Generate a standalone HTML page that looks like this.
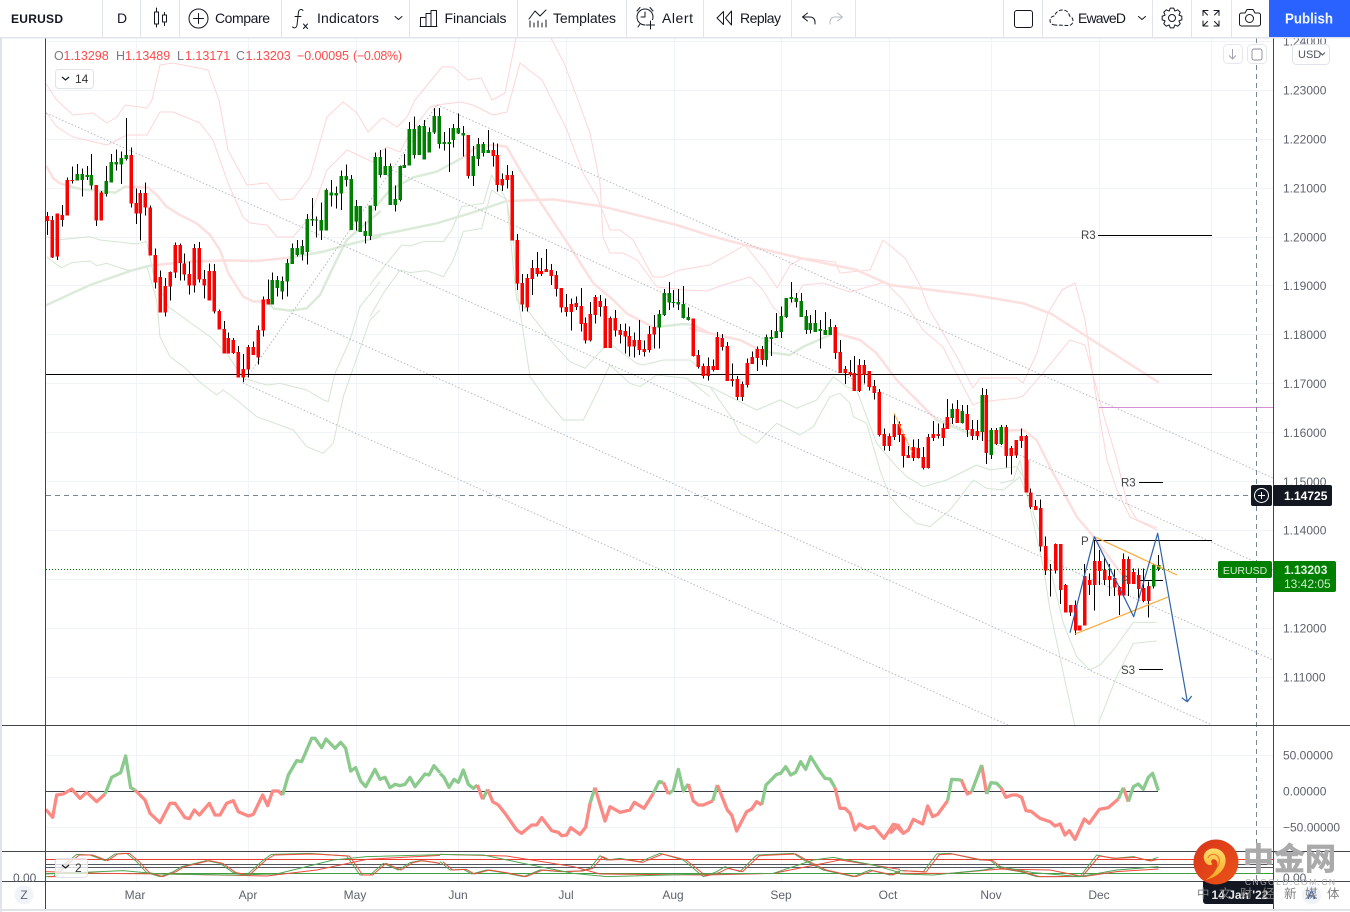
<!DOCTYPE html>
<html><head><meta charset="utf-8"><title>EURUSD</title>
<style>
html,body{margin:0;padding:0;background:#fff;width:1350px;height:912px;overflow:hidden}
svg{display:block;font-family:"Liberation Sans","Noto Sans CJK SC",sans-serif}
.g{fill:none;stroke:#f0f3fa;stroke-width:1}
.tp{fill:none;stroke:#fcdfdf;stroke-width:2.5;stroke-linejoin:round;stroke-linecap:round}
.tg{fill:none;stroke:#dcebd9;stroke-width:2.5;stroke-linejoin:round;stroke-linecap:round}
.np{fill:none;stroke:#fdd6d6;stroke-width:1;stroke-linejoin:round}
.ng{fill:none;stroke:#d3e6d1;stroke-width:1;stroke-linejoin:round}
.w{fill:none;stroke:#000;stroke-width:3}
.r{fill:none;stroke:#f00;stroke-width:11}
.v{fill:none;stroke:#008000;stroke-width:11}
.cr{fill:none;stroke:#fb8a84;stroke-width:10;stroke-linejoin:round}
.cg{fill:none;stroke:#8bca8d;stroke-width:10;stroke-linejoin:round}
.lr{fill:none;stroke:#ef4b3c;stroke-width:3;stroke-linejoin:round}
.lg{fill:none;stroke:#4ea552;stroke-width:3;stroke-linejoin:round}
.t{font-size:14px;fill:#131722}
.i{fill:none;stroke:#131722;stroke-width:1;stroke-linejoin:round;stroke-linecap:round}
.p{font-size:12px;fill:#5f626d}
.m{font-size:12px;fill:#5f626d;text-anchor:middle}
.lab{font-size:12.5px;fill:#787b86}
.val{font-size:12.5px;fill:#ff4a4a}
</style></head><body>
<svg width="1350" height="912" viewBox="0 0 1350 912" xmlns="http://www.w3.org/2000/svg">
<rect width="1350" height="912" fill="#fff"/>

<!-- grid -->
<g shape-rendering="crispEdges">
<path class="g" d="M46 41.5H1273M46 90.5H1273M46 139.5H1273M46 188.5H1273M46 237.5H1273M46 285.5H1273M46 334.5H1273M46 383.5H1273M46 432.5H1273M46 481.5H1273M46 530.5H1273M46 579.5H1273M46 628.5H1273M46 677.5H1273M46 755.5H1273M46 827.5H1273"/>
<path class="g" d="M136.5 38V881M248.5 38V881M356.5 38V881M458.5 38V881M566.5 38V881M674.5 38V881M781.5 38V881M889.5 38V881M991.5 38V881M1099.5 38V881M1211.5 38V881"/>
</g>

<!-- thin pink bands, page coords -->
<path class="np" d="M45.5 83L56.7 100 73 115 93 113 107 123 117 117 125 105 147 108 152 100 160 65 173 63 208 70 219 100 228 150 247 185 267 183 280 200 293 199 310 177 327 117 343 102 357 113 368 132 380 120 383 118 397 127 407 117 415 100 442 67 453 67 468 80 481 78 492 100 505 93 516 38M551 38L564 63 578 100 590 133 600 183 603 237 610 253 623 253 637 260 657 287 687 290 707 291 723 285 750 277 763 290 773 307 783 316 795 298 803 285 823 283 850 292 885 282 903 300 923 330 943 347 953 367 973 405 980 402 1017 398 1023 396 1037 380 1048 367 1070 340 1085 345 1105 420 1117 460 1127 503 1137 520 1157 528"/>
<path class="np" d="M46.7 113L57 127 73 137 107 145 127 135 147 135 160 112 173 112 200 123 213 140 228 183 243 217 250 223 267 225 277 237 293 237 310 217 327 170 347 150 373 162 380 152 387 147 400 152 410 133 430 107 437 105 460 102 473 105 493 115 507 112 510 100 520 63 542 80 552 100 567 130 583 173 597 197 610 230 620 230 633 240 653 277 663 277 680 270 710 265 745 245 765 270 777 288 790 265 803 258 835 262 840 273 870 270 883 240 905 258 920 285 928 307 947 340 957 357 973 388 980 378 1017 378 1023 383 1037 353 1048 313 1062 290 1075 283 1085 320 1095 390 1107 460 1117 490 1130 517 1157 530"/>

<!-- thin green / thick MAs -->
<g transform="translate(40,100) scale(.33333)">
<path class="ng" style="stroke-width:3" d="M20 410L50 420 150 410 180 420 290 432 320 425 340 520 385 620 440 660 510 710 560 760 610 835 680 855 720 850 800 870 850 900 865 905 885 820 930 720 960 620 1020 545M20 470L45 490 65 503 95 488 150 483 170 497 200 490 260 510 290 510 320 497 350 600 360 710 390 770 430 800 490 855 530 885 550 870 590 900 650 950 760 990 800 1040 850 1060 880 1030 910 890 990 660 1020 630"/>
<path class="tp" style="stroke-width:7.5" d="M20 200L40 235 60 250 85 258M255 260L325 263 350 285 380 320 420 345 470 370 510 405 540 450 565 520 610 590 640 605 680 603M330 497L450 485 560 481 650 483 750 473"/>
<path class="tg" style="stroke-width:7.5" d="M85 258L125 268 170 272 225 278 255 260M680 603L700 625 750 632 800 625 840 585 880 500 920 420 960 385 1020 335M20 615L150 555 280 510 330 497M750 473L850 455 920 435 1020 410"/>
</g>
<g transform="translate(370,100) scale(.33333)">
<path class="ng" style="stroke-width:3" d="M0 555L50 490 95 435 120 438 160 425 220 425 245 390 275 320 340 310 365 225 410 300 440 600 480 640 550 730 600 785 645 805 700 745 725 735 800 790 820 795 880 780 960 780 1020 830M0 650L40 580 90 510 120 518 170 512 220 530 250 480 280 395 335 385 365 270 410 300 430 420 445 600 480 830 530 900 580 960 640 960 680 880 720 795 780 850 810 860 860 825 950 835 1020 890"/>
<path class="tg" style="stroke-width:7.5" d="M0 340L60 270 130 232 200 215 280 172M0 410L80 395 200 370 300 340 410 303M850 682L940 672 970 675"/>
<path class="tp" style="stroke-width:7.5" d="M280 172L320 140 370 135 410 140 450 210 520 320 600 440 670 550 730 600 770 640 850 682M970 675L1020 700M410 303L550 298 700 320 820 350 920 375 1020 407"/>
</g>
<g transform="translate(690,270) scale(.33333)">
<path class="ng" style="stroke-width:3" d="M0 335L60 350 100 370 150 395 200 420 270 390 320 415 380 390 430 320 470 350 500 360 560 520 620 590 650 620 700 650 770 630 860 585 900 600 980 590 1000 620 1020 700M60 350L130 450 150 490 200 520 260 460 330 495 370 470 420 380 450 370 480 400 490 440 530 460 570 600 600 680 635 720 680 760 720 770 780 720 850 630 890 655 940 660 990 620 1020 700"/>
<path class="tp" style="stroke-width:7.5" d="M0 175L60 190 150 210 220 245M440 190L510 210 560 250 620 330 680 390 740 450M950 482L1000 480 1040 510 1080 590M500 0L600 45 850 75 1000 100 1080 130"/>
<path class="tg" style="stroke-width:7.5" d="M220 245L300 255 340 230 420 195M740 450L800 475 835 490 950 482"/>
</g>
<g transform="translate(1000,460) scale(.33333)">
<path class="ng" style="stroke-width:3" d="M75 0L100 160 140 280 190 490 230 590 270 630 300 615 340 570 400 487 470 487M60 0L80 100 130 320 150 450 190 640 225 800M295 790L350 650 400 550 470 543M0 70L40 60 60 0"/>
<path class="tp" style="stroke-width:7.5" d="M150 21L230 170 285 235 370 350"/>
</g>
<path class="tp" d="M710 235.700L745 245 800 258 857 270M1050 313L1100 345 1158 382"/>

<!-- dotted channels -->
<g fill="none" stroke="#b6b9c0" stroke-width="1" stroke-dasharray="1.5 2">
<path d="M437 105L1273 478M392 170L1273 570M46 113L1273 660M292 313L1212 725M243 383L1008 725M243 383L437 105"/>
</g>

<!-- horizontals -->
<g shape-rendering="crispEdges">
<path d="M46 374.5H1212M1098 235.5H1212M1139 482.5H1163M1094 540.5H1212M1139 580.5H1163M1139 669.5H1163" stroke="#000" stroke-width="1" fill="none"/>
<path d="M1099 407.5H1273" stroke="#d58fd5" fill="none"/>
<path d="M46 495.5H1251" stroke="#758696" stroke-dasharray="5 4" fill="none"/>
<path d="M46 569.5H1218" stroke="#008000" stroke-dasharray="1 2" fill="none"/>
</g>

<!-- candles -->
<g shape-rendering="crispEdges">
<g transform="translate(40,100) scale(.33333)">
<path class="w" d="M22 336V405M37 348V474M52 340V480M67 315V380M82 232V347M97 200V250M112 192V242M127 205V290M142 198V240M154 162V268M169 255V378M184 273V362M199 198V290M214 162V248M229 148V212M244 155V252M259 54V182M274 142V322M289 265V372M301 270V422M316 247V347M331 316V467M346 445V566M361 511V638M376 534V650M391 514V602M406 427V534M421 430V542M433 460V542M448 484V584M463 432V578M478 426V548M493 510V596M508 490V602M523 492V640M538 628V689M553 663V761M565 697V761M580 714V762M595 738V833M610 762V846M625 735V833M640 725V765M655 676V794M670 590V710M685 538V614M697 517V614M712 528V590M727 530V598M742 477V590M757 430V492M772 420V470M787 420V482M802 342V494M817 294V378M829 350V412M844 308V420M859 265V392M874 240V320M889 260V326M904 212V330M919 193V260M934 225V390M949 300V392M961 318V396M976 365V430M991 316V420"/>
<path class="r" d="M22 348V363M37 360V472M52 340V470M67 345V360M82 240V347M97 240V243M169 255V362M184 278V362M274 165V311M289 309V341M301 279V341M316 279V323M331 322V467M346 465V548M361 531V638M376 558V638M391 516V560M406 435V518M421 435V489M433 491V524M448 522V557M463 444V557M478 444V539M493 537V557M508 513V602M523 513V635M538 633V689M553 687V761M565 714V761M580 720V759M595 756V833M610 807V833M625 741V809M640 741V765M655 690V773M670 598V692M685 597V614"/>
<path class="v" d="M112 222V242M127 222V240M142 225V231M154 225V257M199 243V282M214 186V248M229 186V194M244 174V194M259 165V177M697 540V614M712 540V564M727 543V575M742 489V545M757 444V492M772 444V465M787 438V464M802 357V456M817 357V362M829 359V362M844 360V392M859 270V392M874 277V287M889 279V287M904 228V281M919 228V240M934 237V390M949 318V365M961 318V396M976 393V408M991 316V408"/>
</g>
<g transform="translate(370,100) scale(.33333)">
<path class="w" d="M16 158V332M31 150V232M46 145V225M61 190V315M76 256V335M91 196V305M103 162V204M118 66V197M133 50V176M148 75V165M163 60V178M178 83V158M193 24V102M208 24V145M223 96V152M238 84V216M250 72V142M265 40V102M280 78V170M295 105V236M310 138V258M325 114V198M340 126V170M355 90V158M370 128V200M382 130V275M397 220V273M412 195V265M427 213V422M442 402V570M457 522V635M472 522V635M487 480V585M502 456V530M514 474V528M529 447V516M544 492V555M559 513V590M574 564V638M589 582V650M604 595V692M619 590V630M634 564V695M646 652V730M661 606V725M676 585V670M691 585V650M706 595V744M721 650V744M736 630V710M751 672V730M766 670V760M778 680V770M793 697V772M808 660V765M823 722V770M838 678V758M853 645V745M868 630V745M883 567V648M898 546V630M910 570V622M925 567V630M940 558V656M955 622V662"/>
<path class="r" d="M295 105V228M370 150V168M382 165V255M397 237V256M412 225V240M427 225V422M442 420V551M457 549V614M472 534V623M487 504V537M502 504V522M514 513V522M529 507V516M544 510V528M559 525V567M574 564V623M589 621V636M604 612V636M619 609V621M634 618V672M646 669V722M661 642V722M676 591V645M691 603V621M706 618V744M721 654V744M736 654V692M751 690V705M766 693V710M778 708V740M793 720V740M808 720V750M823 747V756M838 702V750M853 681V704"/>
<path class="v" d="M16 171V318M31 171V225M46 198V225M61 198V315M76 297V315M91 198V300M103 195V204M118 87V197M133 87V165M148 78V165M163 78V178M178 96V158M193 48V98M208 48V132M223 126V132M238 126V132M250 84V120M265 84V101M280 99V107M310 168V228M325 132V177M340 132V159M355 150V159M868 642V683M883 579V645M898 579V607M910 606V609M925 606V614M940 612V654M955 651V660"/>
</g>
<g transform="translate(690,270) scale(.33333)">
<path class="w" d="M10 146V260M25 240V295M40 280V325M55 262V332M70 268V305M82 186V300M97 192V242M112 216V333M127 280V350M142 318V390M157 335V393M172 265V353M187 245V282M202 230V303M217 228V285M229 193V290M244 180V258M259 129V204M274 110V204M289 84V144M304 36V98M319 69V113M334 69V141M349 120V192M361 135V190M376 120V186M391 150V236M406 126V195M421 147V195M436 165V267M451 210V309M466 288V342M481 270V320M493 258V363M508 267V366M523 270V340M538 303V362M553 330V388M568 357V500M583 475V542M598 490V543M613 430V510M628 455V516M640 490V592M655 528V564M670 508V573M685 507V565M700 531V598M715 492V596M730 453V513M745 460V505M760 460V528M772 387V477M787 400V462M802 390V459M817 405V460M832 405V501M847 450V510M862 450V510M877 354V513M889 357V582M904 474V567M919 474V525M934 465V525M949 465V592M964 528V614M979 510V564M994 475V534M1009 495V668"/>
<path class="r" d="M10 146V258M25 255V291M40 288V318M55 288V318M70 288V300M82 201V300M97 204V231M112 228V333M127 327V333M142 327V381M157 342V381M172 279V345M187 261V282M202 237V264M217 237V270M436 171V249M451 246V309M466 297V309M481 306V315M493 309V363M508 285V363M523 285V315M538 303V351M553 348V369M568 366V495M583 492V528M598 498V528M613 462V501M628 462V495M640 492V558M655 555V564M670 531V564M685 534V564M700 561V594M715 501V594M730 492V504M745 492V498M760 474V504M772 441V477M802 417V459M832 432V480M847 477V498M862 483V498M889 375V549M919 480V522M949 471V558M964 534V558M979 510V556M994 498V513M1009 498V668"/>
<path class="v" d="M229 201V270M244 201V207M259 183V204M274 138V186M289 84V141M304 81V87M319 84V96M334 93V141M349 138V180M361 159V180M376 159V186M391 177V183M406 180V195M421 171V195M787 417V444M817 423V459M877 375V486M904 480V555M934 471V522"/>
</g>
<g transform="translate(1000,460) scale(.33333)">
<path class="w" d="M92 85V147M107 120V150M122 118V275M137 230V345M152 312V410M167 250V340M182 252V432M197 372V457M212 435V468M227 422V525M239 497V512M254 312V497M269 340V405M284 240V452M299 270V375M314 290V375M329 312V408M344 330V408M359 378V465M371 280V410M386 290V408M401 325V372M416 325V415M431 326V426M446 365V473M461 310V385M476 285V333"/>
<path class="r" d="M80 0V98M92 98V141M107 138V150M122 144V260M137 258V332M152 330V332M167 252V332M182 252V390M197 375V457M212 435V457M227 435V512M239 497V512M254 348V497M269 360V375M284 303V375M299 303V333M314 330V360M329 348V360M344 354V383M359 381V407M371 297V407M386 297V372M401 336V372M416 345V387M431 384V423M446 378V423"/>
<path class="v" d="M461 315V380M476 315V327"/>
</g>
</g>

<!-- drawings -->
<path d="M894 413L912 452" stroke="#ffb65c" fill="none" stroke-width="1"/>
<path d="M1095 537L1177 575M1075 634L1168 597" stroke="#ffa733" fill="none" stroke-width="1.2"/>
<path d="M1070 632.7L1094.3 536.7 1133.7 616.7 1157.7 533.3 1187.3 701.7M1181.7 697.7L1187.3 701.7 1191.7 696" stroke="#2f62a8" fill="none" stroke-width="1.2" stroke-linejoin="round"/>
<g font-size="11.5" fill="#444">
<text x="1081" y="239">R3</text>
<text x="1121" y="486.5">R3</text>
<text x="1081" y="545">P</text>
<text x="1121" y="584">P</text>
<text x="1121" y="674">S3</text>
</g>

<!-- CCI pane -->
<path d="M46 791.5H1158" stroke="#3c3f49" stroke-width="1" fill="none" shape-rendering="crispEdges"/>
<g transform="translate(0,720) scale(.33333)">
<path class="cr" d="M137 268L158 292 170 225 190 222 215 207 240 235 260 217 290 245 315 222M405 210L435 240 450 280 480 308 510 250 525 250 555 293 568 296 583 270 598 285 628 250 645 285 660 285 680 250 700 242 715 275 745 288 760 283 788 225 803 257 818 213 835 213 848 225"/>
<path class="cg" d="M315 222L335 172 362 158 377 108 392 203 405 210M848 225L865 165 890 122 905 125 935 55 945 55 965 83 978 57 1005 85 1022 67 1037 85 1052 153 1067 143 1082 183 1097 200 1125 148 1140 178 1155 172 1170 203 1185 193 1200 197 1215 193 1230 172 1245 200 1275 162 1287 165 1302 137 1320 158"/>
</g>
<g transform="translate(440,720) scale(.33333)">
<path class="cg" d="M0 160L12 172 27 202 42 178 55 187 70 150 85 193 100 205 112 195M128 238L143 208M450 250L465 203M640 220L657 185 670 187M685 222L700 210 715 148 730 213 745 192M818 243L832 195M965 255L978 195 1010 163 1022 160 1037 140 1052 165 1067 157 1082 125 1097 148 1112 110 1140 155 1155 175 1170 177 1185 203"/>
<path class="cr" d="M112 195L128 238M143 208L158 245 175 255 195 280 230 330 245 340 275 315 290 315 305 293 335 332 355 337 365 347 380 345 392 323 420 343 437 322 450 250M465 203L495 303 510 260 540 277 570 270 583 247 612 265 640 220M670 187L685 222M745 192L760 243 775 255 790 255 818 243M832 195L862 270 875 285 890 333 920 275 935 267 950 245 965 255M1185 203L1200 265 1215 265 1230 280 1245 330 1258 312 1282 325 1302 320 1332 355 1360 313 1375 316 1390 340"/>
</g>
<g transform="translate(900,720) scale(.33333)">
<path class="cr" d="M-30 340L-10 320 10 340 25 330 40 298 68 312 83 258 98 290 113 283 143 242M183 178L202 222 215 215M245 135L260 222M303 203L318 232 335 225 350 225 365 232 378 272 393 274 420 295 450 305 465 318 480 312 495 345 508 332 525 358 553 297 568 310 598 268 625 263 655 237M670 203L685 245"/>
<path class="cg" d="M143 242L155 178 183 180M215 215L245 135M260 222L273 188 290 190 303 203M655 237L670 203M685 245L700 200 715 192 730 208 745 172 758 160 775 212"/>
</g>

<!-- lower pane -->
<g shape-rendering="crispEdges" fill="none">
<path d="M46 859.5H1273" stroke="#ee3b2b"/>
<path d="M46 864.5H1273M46 867.5H1273" stroke="#55585f"/>
<path d="M46 873.5H1273" stroke="#3f9e43"/>
</g>
<g transform="translate(0,720) scale(.33333)">
<path class="lg" d="M137 470L160 470 185 440 230 403 270 405 315 422 345 402 380 400 410 425 440 458 480 470 520 455 545 440 620 422 660 430 700 458 740 465 790 420 815 403 930 400 1040 408 1080 465 1110 465 1150 430 1195 450 1230 428 1260 422 1310 428 1320 432"/>
<path class="lr" d="M145 470L168 470 193 440 238 405 278 405 323 422 353 402 388 400 418 425 448 458 488 470 528 455 553 440 628 422 668 430 708 458 748 465 798 420 823 405 938 402 1048 408 1088 465 1118 465 1158 430 1203 450 1238 428 1268 422 1320 430"/>
<path class="lr" d="M137 455L300 460 500 462 800 468 950 450 1100 418 1320 406"/>
<path class="lg" d="M137 462L370 452 480 462 700 465 830 462 1000 420 1100 410 1320 404"/>
</g>
<g transform="translate(440,720) scale(.33333)">
<path class="lg" d="M0 425L30 450 70 448 95 462 140 450 190 458 250 470 300 450 360 455 420 453 450 445 480 407 500 420 540 415 600 425 660 400 730 420 790 470 830 455 855 440 900 455 950 405 1060 400 1100 425 1150 450 1240 470 1290 450 1350 465 1380 452"/>
<path class="lr" d="M8 425L38 450 78 448 103 462 148 450 198 458 258 470 308 450 368 455 428 453 458 445 488 410 508 420 548 418 608 427 668 402 738 420 798 468 838 458 863 445 908 455 958 407 1068 402 1108 425 1158 450 1248 470 1298 452 1358 465 1380 455"/>
<path class="lr" d="M0 403L200 408 400 440 480 462 800 465 1000 460 1200 420 1380 448"/>
<path class="lg" d="M0 403L130 405 250 430 400 460 500 470 800 462 1000 460 1120 420 1180 412 1300 435 1380 458"/>
</g>
<g transform="translate(900,720) scale(.33333)">
<path class="lg" d="M0 452L70 455 110 402 150 400 240 420 270 420 300 445 360 455 410 470 470 470 540 470 590 405 640 415 700 410 745 422 775 412"/>
<path class="lr" d="M8 452L78 456 118 404 158 402 248 420 278 422 308 445 368 455 418 470 478 470 548 468 598 408 648 415 708 412 752 423 775 418"/>
<path class="lr" d="M0 460L150 460 300 447 450 450 550 470 650 455 775 447"/>
<path class="lg" d="M0 462L100 465 250 450 300 440 400 458 540 470 650 450 775 440"/>
</g>
<rect x="55.5" y="858.5" width="32" height="19" rx="3" fill="#fff" fill-opacity=".75" stroke="#e0e3eb"/>
<path d="M62 865l3.5 3 3.5-3" fill="none" stroke="#131722" stroke-width="1.2"/>
<text x="75" y="872" font-size="12" fill="#333">2</text>

<!-- crosshair vertical -->
<path d="M1256.5 38V881" stroke="#758696" stroke-dasharray="5 4" fill="none" shape-rendering="crispEdges"/>

<!-- pane lines / axes -->
<g shape-rendering="crispEdges" fill="none" stroke="#434651">
<path d="M2 725.5H1350M2 851.5H1350M2 881.5H1350"/>
<path d="M45.5 38V909M1273.5 38V909"/>
</g>
<rect x="0" y="0" width="2" height="912" fill="#e0e3eb"/>
<rect x="0" y="909" width="1350" height="2" fill="#e0e3eb"/>

<!-- price axis -->
<g class="p">
<text class="p" x="1283" y="45.5">1.24000</text>
<text class="p" x="1283" y="94.5">1.23000</text>
<text class="p" x="1283" y="143.5">1.22000</text>
<text class="p" x="1283" y="192.5">1.21000</text>
<text class="p" x="1283" y="241.5">1.20000</text>
<text class="p" x="1283" y="290">1.19000</text>
<text class="p" x="1283" y="339">1.18000</text>
<text class="p" x="1283" y="388">1.17000</text>
<text class="p" x="1283" y="437">1.16000</text>
<text class="p" x="1283" y="486">1.15000</text>
<text class="p" x="1283" y="534.5">1.14000</text>
<text class="p" x="1283" y="632.5">1.12000</text>
<text class="p" x="1283" y="681.5">1.11000</text>
<text class="p" x="1283" y="759.5">50.00000</text>
<text class="p" x="1283" y="795.5">0.00000</text>
<text class="p" x="1283" y="831.5">−50.00000</text>
<text class="p" x="1283" y="882">0.00</text>
<text class="p" x="13" y="882">0.00</text>
</g>

<!-- time axis -->
<text class="m" x="135" y="899">Mar</text>
<text class="m" x="248" y="899">Apr</text>
<text class="m" x="355" y="899">May</text>
<text class="m" x="458" y="899">Jun</text>
<text class="m" x="566" y="899">Jul</text>
<text class="m" x="673" y="899">Aug</text>
<text class="m" x="781" y="899">Sep</text>
<text class="m" x="888" y="899">Oct</text>
<text class="m" x="991" y="899">Nov</text>
<text class="m" x="1099" y="899">Dec</text>
<circle cx="24" cy="895" r="9.5" fill="#f0f3fa"/>
<text class="m" x="24" y="899">Z</text>
<circle cx="1311.5" cy="895" r="9.5" fill="#f0f3fa"/>
<text x="1311.5" y="899" font-size="12" fill="#2f4fa8" text-anchor="middle">A</text>

<!-- price flags -->
<rect x="1218" y="561" width="54" height="17" rx="2" fill="#008000"/>
<text x="1245" y="574" font-size="10.5" fill="#fff" fill-opacity=".85" text-anchor="middle">EURUSD</text>
<rect x="1273" y="561" width="63" height="31" rx="2" fill="#008000"/>
<text x="1284" y="574" font-size="12" font-weight="bold" fill="#fff" fill-opacity=".9">1.13203</text>
<text x="1284" y="588" font-size="12" fill="#cfe8cf">13:42:05</text>
<rect x="1251" y="485" width="21" height="21" rx="2" fill="#131722"/>
<circle cx="1261.5" cy="495.5" r="7" fill="none" stroke="#fff" stroke-width="1"/>
<path d="M1258 495.5h7M1261.5 492v7" stroke="#fff" stroke-width="1" fill="none"/>
<rect x="1273" y="485" width="59" height="21" rx="2" fill="#131722"/>
<text x="1284" y="500" font-size="12" font-weight="bold" fill="#fff">1.14725</text>

<!-- legend -->
<text class="lab" x="54" y="60">O</text><text class="val" x="63.5" y="60">1.13298</text>
<text class="lab" x="116" y="60">H</text><text class="val" x="125" y="60">1.13489</text>
<text class="lab" x="177" y="60">L</text><text class="val" x="185" y="60">1.13171</text>
<text class="lab" x="236" y="60">C</text><text class="val" x="245.5" y="60">1.13203</text>
<text class="val" x="297" y="60" textLength="52">−0.00095</text>
<text class="val" x="353" y="60" textLength="49">(−0.08%)</text>
<rect x="55.5" y="69.5" width="38" height="19" rx="3" fill="#fff" stroke="#e0e3eb"/>
<path d="M62 77l3.5 3 3.5-3" fill="none" stroke="#131722" stroke-width="1.2"/>
<text x="75" y="83" font-size="12" fill="#333">14</text>

<!-- scale buttons -->
<rect x="1223.5" y="44.5" width="19" height="19" rx="4" fill="#fff" stroke="#e6e8ef"/>
<path d="M1232.5 49v10M1229 55.5l3.5 3.5 3.5-3.5" fill="none" stroke="#a0a3ad"/>
<rect x="1247.5" y="44.5" width="19" height="19" rx="4" fill="#fff" stroke="#e6e8ef"/>
<path d="M1252 53v-2a2 2 0 0 1 2-2h6a2 2 0 0 1 2 2v2M1252 56v2a2 2 0 0 0 2 2h6a2 2 0 0 0 2-2v-2M1252 53v3M1262 53v3" fill="none" stroke="#8a8d97" stroke-width=".9"/>
<rect x="1292.5" y="44.5" width="37" height="20" rx="4" fill="#fff" stroke="#e0e3eb"/>
<text x="1298" y="58" font-size="11" fill="#50535e">USD</text>
<path d="M1320 52.5l2.5 2.5 2.5-2.5" fill="none" stroke="#50535e"/>

<!-- toolbar -->
<rect x="0" y="0" width="1350" height="37" fill="#fff"/>
<rect x="0" y="37" width="1350" height="1.5" fill="#e0e3eb"/>
<g shape-rendering="crispEdges" stroke="#e0e3eb" fill="none">
<path d="M102.5 0V37M140.5 0V37M179.5 0V37M281.5 0V37M409.5 0V37M517.5 0V37M626.5 0V37M703.5 0V37M791.5 0V37M855.5 0V37M1003.5 0V37M1042.5 0V37M1152.5 0V37M1191.5 0V37M1231.5 0V37"/>
</g>
<text x="11" y="23" font-size="12" font-weight="bold" fill="#131722" textLength="52">EURUSD</text>
<text class="t" x="117" y="23">D</text>
<path class="i" d="M156.5 8V12M156.5 24V27M164.5 12.5V15M164.5 22V25.5"/>
<rect class="i" x="154.5" y="12" width="4" height="12"/>
<rect class="i" x="162.5" y="15" width="4" height="7"/>
<circle class="i" cx="198.5" cy="18.5" r="9.5"/>
<path class="i" d="M198.5 13.5v10M193.5 18.5h10"/>
<text class="t" x="215" y="23" textLength="55">Compare</text>
<path class="i" d="M303 10.5c-1-1.5-4-1.5-4.5 1.5L297 25c-.4 3-3 3.5-4.5 2M295 16.5h6"/>
<path class="i" d="M303.5 24l4 4.5M307.5 24l-4 4.5"/>
<text class="t" x="317" y="23" textLength="62">Indicators</text>
<path class="i" d="M395 16.5l3.5 3 3.500-3"/>
<path class="i" d="M420.5 26.5V17.5h5.5v9M426 26.5V13.5h5v13M431 26.5V10.5h5.5v16M420 26.5h17"/>
<text class="t" x="444.5" y="23" textLength="62">Financials</text>
<path class="i" d="M529 19l6-8 5 5 6-6M530 21v6M534 23v4M538 21v6M542 23v4M546 20v7"/>
<text class="t" x="553" y="23" textLength="63">Templates</text>
<circle class="i" cx="645" cy="17" r="8"/>
<path class="i" d="M645 12v5h-4M637 11l3-3.500M650 7.500l3 3.500M640 24l-2 3"/>
<rect x="645.5" y="20" width="10" height="10" fill="#fff"/>
<path class="i" d="M650.5 21v8M646.5 25h8"/>
<text class="t" x="662" y="23" textLength="31">Alert</text>
<path class="i" d="M723.5 11.5l-6.5 6.5 6.500 6.500zM731.5 11v14l-6-7z"/>
<text class="t" x="740" y="23" textLength="41">Replay</text>
<path class="i" d="M807.5 13l-5 4 5 4M803 17h7c3 0 5 2 5 5v2"/>
<path d="M837.5 13l5 4-5 4M842 17h-7c-3 0-5 2-5 5v2" fill="none" stroke="#b8bbc4" stroke-linecap="round" stroke-linejoin="round"/>
<rect class="i" x="1014.5" y="10.5" width="18" height="17" rx="2.5"/>
<path class="i" stroke-dasharray="3 2.500" d="M1055 25c-3 0-5-2-5-4.500 0-2.500 2-4.500 4.500-4.500 1-3.500 4-6 8-6s6.500 2.500 7 6c2 .5 3.500 2.500 3.500 5 0 2.500-2 4.500-4.500 4.500z"/>
<text class="t" x="1078" y="23" textLength="48">EwaveD</text>
<path class="i" d="M1138.5 16.5l3.5 3 3.500-3"/>
<g transform="translate(1172,18)">
<path class="i" d="M9.85 -1.74L9.85 1.74 6.93 2.87 8.19 5.74 5.74 8.19 2.87 6.93 1.74 9.85 -1.74 9.85 -2.87 6.93 -5.74 8.19 -8.19 5.74 -6.93 2.87 -9.85 1.74 -9.85 -1.74 -6.93 -2.87 -8.19 -5.74 -5.74 -8.19 -2.87 -6.93 -1.74 -9.85 1.74 -9.85 2.87 -6.93 5.74 -8.19 8.19 -5.74 6.93 -2.87z"/>
<circle class="i" cx="0" cy="0" r="3.5"/>
</g>
<path class="i" d="M1203 15.5v-5h5M1203 10.5l4.500 4.500M1219 15.5v-5h-5M1219 10.5l-4.500 4.500M1203 21v5h5M1203 26l4.500-4.500M1219 21v5h-5M1219 26l-4.500-4.500"/>
<path class="i" d="M1241.5 13h3.500l2-3.500h6l2 3.500h3.500a2 2 0 0 1 2 2v9a2 2 0 0 1-2 2h-17a2 2 0 0 1-2-2v-9a2 2 0 0 1 2-2z"/>
<circle class="i" cx="1249.5" cy="18.5" r="4"/>
<rect x="1269" y="0" width="81" height="37" fill="#2962ff"/>
<text x="1285" y="23.5" font-size="14.5" font-weight="bold" fill="#fff" fill-opacity=".95" textLength="48" lengthAdjust="spacingAndGlyphs">Publish</text>

<!-- date label -->
<path d="M1203 881H1273V904H1206a3 3 0 0 1-3-3z" fill="#131722"/>
<text x="1240" y="899" font-size="12" font-weight="bold" fill="#e8e8e8" text-anchor="middle">14 Jan '22</text>

<!-- watermark -->
<defs>
<linearGradient id="lg1" x1="0" y1="0" x2="1" y2="1"><stop offset="0" stop-color="#d9331a"/><stop offset="1" stop-color="#ea5418"/></linearGradient>
<linearGradient id="lg2" x1="0" y1="0" x2="0" y2="1"><stop offset="0" stop-color="#ffdc6a"/><stop offset="1" stop-color="#f8a51f"/></linearGradient>
</defs>
<circle cx="1216" cy="862" r="22.5" fill="url(#lg1)"/>
<path d="M1204 859c-1.5-7 5-11 10-10.500 7.500 0 12.500 6.500 11.500 13.500-1 9.500-10 15.500-20 18 6-4 11-8.500 12-15 .5-4-2.500-6.500-5-5.500-2 1-1.500 3.500 0 4.500-2.500 2.500-7.500.5-8.500-5z" fill="url(#lg2)"/>
<path d="M1208 858c1-4 7-5 10-1.500 3 4 1 9-3 13" fill="none" stroke="#e04a1a" stroke-width="1.2" stroke-opacity=".6"/>
<text x="1243" y="870" font-size="31" font-weight="bold" fill="#aaaaaa" stroke="#aaaaaa" stroke-width=".7" font-family="'Noto Sans CJK SC',sans-serif">中金网</text>
<text x="1245" y="885" font-size="8.5" fill="#aaaaaa" textLength="90">CNGOLD.COM.CN</text>
<text y="898" font-size="12.5" fill="#7f7f7f" x="1197 1219 1240 1262 1284 1305 1327" font-family="'Noto Sans CJK SC',sans-serif">中文财经新媒体</text>
</svg>
</body></html>
